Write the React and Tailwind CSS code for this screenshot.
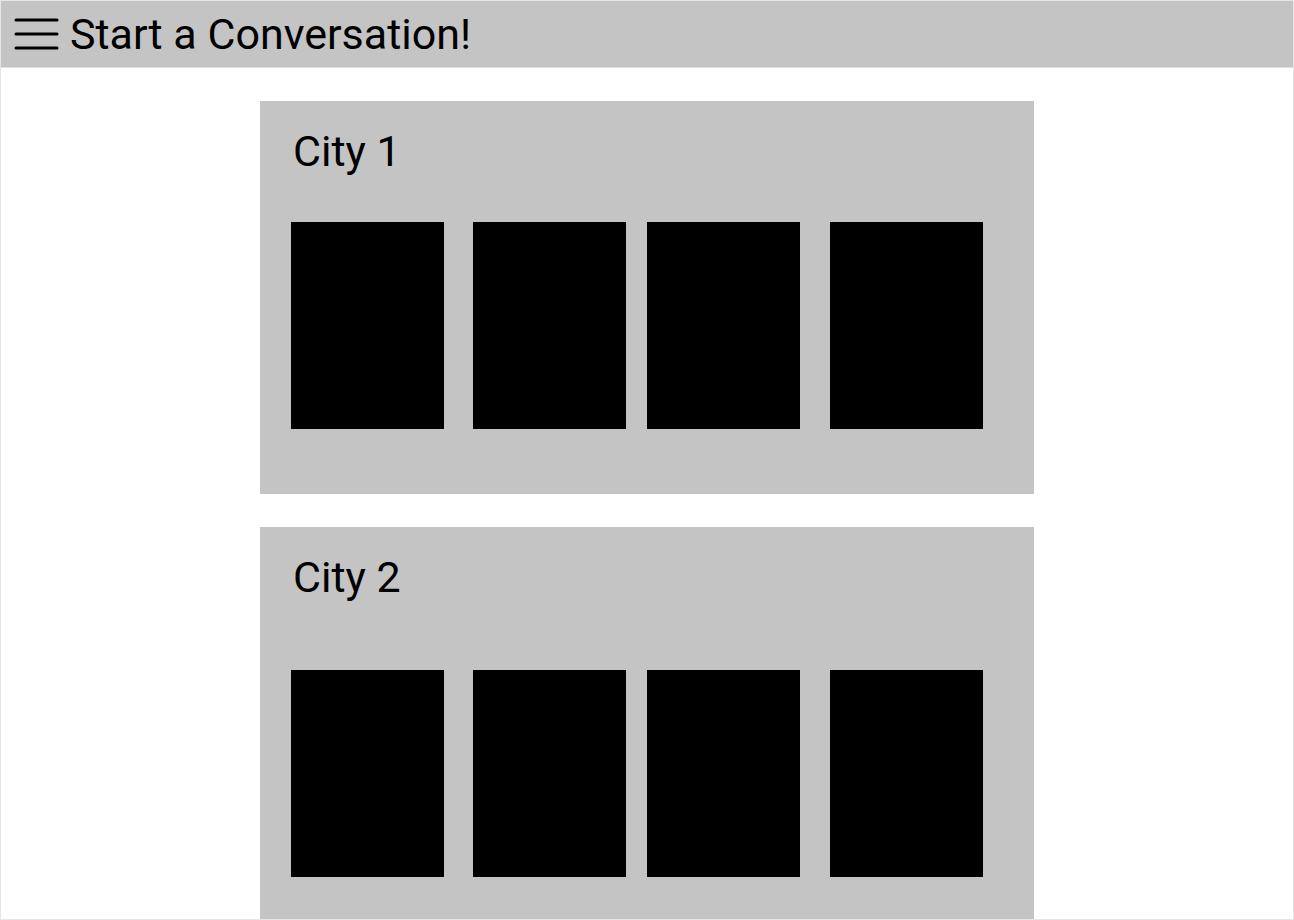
import React from 'react';

const boxGaps = ['ml-0', 'ml-[29px]', 'ml-[21px]', 'ml-[30px]'];

const CityCard = ({ name, gapClass, cardClass }) => (
  <div className={`bg-[#c4c4c4] w-[774px] pt-[29px] pl-[31px] ${cardClass}`}>
    <h2 className="ml-[2px] text-[43px] leading-none text-black">{name}</h2>
    <div className={`flex ${gapClass}`}>
      {boxGaps.map((g, i) => (
        <div key={i} className={`w-[153px] h-[207px] bg-black ${g}`} />
      ))}
    </div>
  </div>
);

const App = () => {
  return (
    <div
      className="w-[1294px] h-[920px] overflow-hidden border border-[#e6e6e6] bg-white"
      style={{ fontFamily: 'Roboto, "Liberation Sans", sans-serif' }}
    >
      <header className="h-[67px] bg-[#c4c4c4] flex items-center pl-[12px] border-b border-[#e0e0e0]">
        <svg width="47" height="34" viewBox="0 0 47 34" className="shrink-0">
          <line x1="3" y1="3" x2="44" y2="3" stroke="black" strokeWidth="3" strokeLinecap="round" />
          <line x1="3" y1="17" x2="44" y2="17" stroke="black" strokeWidth="3" strokeLinecap="round" />
          <line x1="3" y1="31" x2="44" y2="31" stroke="black" strokeWidth="3" strokeLinecap="round" />
        </svg>
        <h1 className="ml-[10px] text-[43px] leading-none text-black">Start a Conversation!</h1>
      </header>

      <main className="pl-[259px] pt-[33px] flex flex-col gap-[33px]">
        <CityCard name="City 1" gapClass="mt-[49px]" cardClass="h-[393px]" />
        <CityCard name="City 2" gapClass="mt-[71px]" cardClass="h-[400px]" />
      </main>
    </div>
  );
};

export default App;
